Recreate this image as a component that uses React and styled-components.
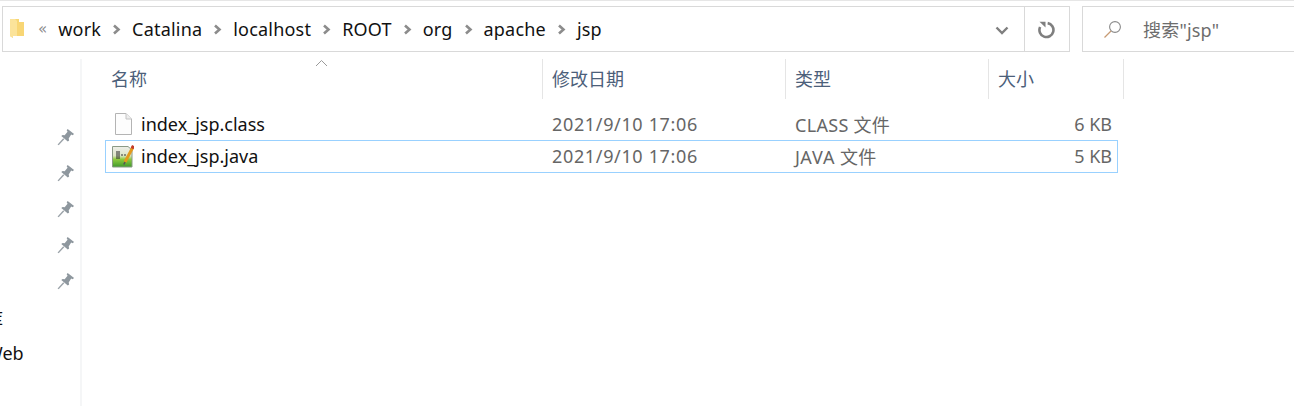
import React from 'react';
import styled, { createGlobalStyle } from 'styled-components';

const GlobalStyle = createGlobalStyle`
  html, body { margin: 0; padding: 0; background: #fff; overflow: hidden; }
  body { font-family: "Noto Sans", "Noto Sans CJK SC", sans-serif; }
`;

const Page = styled.div`
  width: 1294px;
  height: 406px;
  overflow: hidden;
  display: flex;
  flex-direction: column;
  border-top: 1px solid #e6e6e6;
  box-sizing: border-box;
`;

const TopBar = styled.div`
  display: flex;
  height: 46px;
  margin: 5px 0 0 2px;
  flex: none;
`;

const AddressBar = styled.div`
  width: 1068px;
  box-sizing: border-box;
  border: 1px solid #d9d9d9;
  display: flex;
  align-items: center;
  flex: none;
`;

const Crumbs = styled.div`
  flex: 1;
  display: flex;
  align-items: center;
  padding-left: 6px;
  height: 100%;
  min-width: 0;
`;

const Crumb = styled.span`
  font-size: 18px;
  color: #111;
  letter-spacing: 0.2px;
`;

const Chevron = styled.svg`
  width: 9px;
  height: 11px;
  margin: 1px 11px 0;
  flex: none;
`;

const DoubleChevron = styled.span`
  font-size: 15px;
  color: #8a8a8a;
  margin: 0 11px 0 13px;
  font-family: "DejaVu Sans", sans-serif;
  line-height: 1;
`;

const DropButton = styled.div`
  width: 44px;
  height: 100%;
  display: flex;
  align-items: center;
  justify-content: center;
  padding-top: 2px;
  box-sizing: border-box;
`;

const RefreshButton = styled.div`
  width: 45px;
  height: 100%;
  border-left: 1px solid #d9d9d9;
  box-sizing: border-box;
  display: flex;
  align-items: center;
  justify-content: center;
  padding-top: 2px;
`;

const SearchBox = styled.div`
  flex: 1;
  margin-left: 12px;
  border: 1px solid #d9d9d9;
  border-right: none;
  display: flex;
  align-items: center;
  padding-left: 20px;
  gap: 21px;
`;

const SearchText = styled.span`
  font-size: 18px;
  color: #6d6d6d;
  letter-spacing: 0.2px;
`;

const Body = styled.div`
  flex: 1;
  display: flex;
  min-height: 0;
`;

const Sidebar = styled.aside`
  width: 82px;
  flex: none;
  margin-top: 7px;
  border-right: 2px solid #f5f6f7;
  position: relative;
  display: flex;
  flex-direction: column;
  align-items: flex-end;
  padding-top: 60px;
  padding-right: 4px;
  box-sizing: border-box;
  overflow: hidden;
`;

const PinRow = styled.div`
  height: 36px;
  width: 20px;
  display: flex;
  align-items: center;
  justify-content: center;
`;

const ClippedLabel = styled.div`
  position: absolute;
  left: ${p => p.$left}px;
  top: ${p => p.$top}px;
  font-size: 18px;
  color: #111;
  white-space: nowrap;
`;

const Main = styled.main`
  flex: 1;
  padding: 7px 0 0 20px;
  min-width: 0;
  position: relative;
`;

const HeaderRow = styled.div`
  display: flex;
  height: 40px;
`;

const HeaderCell = styled.div`
  width: ${p => p.$w}px;
  box-sizing: border-box;
  border-right: 1px solid #e5e5e5;
  padding-left: 9px;
  font-size: 18px;
  color: #4c607a;
  line-height: 41px;
  flex: none;
`;

const SortCaret = styled.svg`
  position: absolute;
  left: 233px;
  top: 7px;
  width: 13px;
  height: 8px;
`;

const FileList = styled.div`
  margin-top: 9px;
  width: 1013px;
  margin-left: 3px;
`;

const FileRow = styled.div`
  height: 33px;
  margin-bottom: -1px;
  padding-bottom: 2px;
  box-sizing: border-box;
  border: 1px solid ${p => (p.$selected ? '#99d1ff' : 'transparent')};
  display: flex;
  align-items: center;
  font-size: 18px;
`;

const NameCell = styled.div`
  width: 436px;
  flex: none;
  display: flex;
  align-items: center;
  padding-left: 6px;
  box-sizing: border-box;
  gap: 7px;
  color: #111;
`;

const DateCell = styled.div`
  width: 243px;
  flex: none;
  padding-left: 10px;
  box-sizing: border-box;
  color: #666;
  letter-spacing: 0.65px;
`;

const TypeCell = styled.div`
  width: 203px;
  flex: none;
  padding-left: 10px;
  box-sizing: border-box;
  color: #666;
  letter-spacing: 0.3px;
  font-kerning: none;
`;

const SizeCell = styled.div`
  flex: 1;
  text-align: right;
  padding-right: 5px;
  color: #666;
`;

const Arrow = () => (
  <Chevron viewBox="0 0 9 11">
    <path d="M2 1.5 L6.5 5.5 L2 9.5" fill="none" stroke="#8c8c8c" strokeWidth="2.6" />
  </Chevron>
);

const FolderIcon = () => (
  <svg width="16" height="22" viewBox="0 0 16 22" style={{ flex: 'none' }}>
    <path d="M1 1 H10 V4 H15 V17 H4 V20 L1 18 Z" fill="#f7d774" />
    <path d="M1 1 H6 L8 3 V18 H4 V20 L1 18 Z" fill="#fbe39a" />
    <path d="M8 3 V18 H15 V4 H10 Z" fill="#f8d675" />
  </svg>
);

const PinIcon = () => (
  <svg width="18" height="18" viewBox="0 0 16 16">
    <path d="M1 15 L6 9.5" stroke="#9aa2a8" strokeWidth="1.3" fill="none" />
    <path d="M9.5 0.8 L15.2 5.3 L13.8 6.4 L12.6 5.8 L10.4 9.4 L10.8 11.2 L9.6 12 L3.8 7.2 L5 6.2 L6.8 6.4 L9.4 3.4 L8.6 2 Z" fill="#8e979e" />
  </svg>
);

const PlainFileIcon = () => (
  <svg width="22" height="24" viewBox="0 0 22 24" style={{ flex: 'none' }}>
    <path d="M3.5 1.5 H14 L19.5 7 V22.5 H3.5 Z" fill="#fdfdfd" stroke="#b4b4b4" />
    <path d="M14 1.5 V7 H19.5" fill="#eeeeee" stroke="#c4c4c4" />
  </svg>
);

const JavaFileIcon = () => (
  <svg width="22" height="24" viewBox="0 0 22 24" style={{ flex: 'none' }}>
    <defs>
      <linearGradient id="javaFill" x1="0" y1="0" x2="0" y2="1">
        <stop offset="0" stopColor="#eeeeea" />
        <stop offset="0.45" stopColor="#dde6c6" />
        <stop offset="0.62" stopColor="#8fcb3e" />
        <stop offset="1" stopColor="#3f9a2b" />
      </linearGradient>
    </defs>
    <path d="M0.5 2.5 H16 L20 6 V23 H0.5 Z" fill="url(#javaFill)" stroke="#8a9a86" />
    <path d="M5 7 V15 M7 7 V15" stroke="#222" strokeWidth="1" />
    <path d="M9 11 H11 M12 11 H14" stroke="#333" strokeWidth="1" />
    <path d="M13 18 L21 3" stroke="#e39a1e" strokeWidth="3" />
    <path d="M20 4.5 L21.4 1.8" stroke="#c43b2b" strokeWidth="3" />
    <path d="M13 18 L11.8 20.5" stroke="#555" strokeWidth="1.6" />
  </svg>
);

const crumbs = ['work', 'Catalina', 'localhost', 'ROOT', 'org', 'apache', 'jsp'];
const columns = [
  { label: '名称', w: 441 },
  { label: '修改日期', w: 243 },
  { label: '类型', w: 203 },
  { label: '大小', w: 135 },
];
const files = [
  { name: 'index_jsp.class', date: '2021/9/10 17:06', type: 'CLASS 文件', size: '6 KB', Icon: PlainFileIcon },
  { name: 'index_jsp.java', date: '2021/9/10 17:06', type: 'JAVA 文件', size: '5 KB', Icon: JavaFileIcon, selected: true },
];

export default function App() {
  return (
    <Page>
      <GlobalStyle />
      <TopBar>
        <AddressBar>
          <Crumbs>
            <FolderIcon />
            <DoubleChevron>«</DoubleChevron>
            {crumbs.map((c, i) => (
              <React.Fragment key={c}>
                {i > 0 && <Arrow />}
                <Crumb>{c}</Crumb>
              </React.Fragment>
            ))}
          </Crumbs>
          <DropButton>
            <svg width="14" height="9" viewBox="0 0 14 9">
              <path d="M1.5 1.5 L7 7 L12.5 1.5" fill="none" stroke="#7f7f7f" strokeWidth="2.4" />
            </svg>
          </DropButton>
          <RefreshButton>
            <svg width="18" height="18" viewBox="0 0 18 18">
              <path d="M4.5 3 A7 7 0 1 0 13 3.4" fill="none" stroke="#7f7f7f" strokeWidth="2.6" transform="rotate(-30 9 9)" />
              <path d="M1.5 0.8 H7.5 V6.5 Z" fill="#7f7f7f" />
            </svg>
          </RefreshButton>
        </AddressBar>
        <SearchBox>
          <svg width="19" height="19" viewBox="0 0 19 19" style={{ flex: 'none' }}>
            <circle cx="12" cy="7" r="5.4" fill="none" stroke="#8a8a8a" strokeWidth="1.1" />
            <path d="M8 11 L1.5 17.5" stroke="#c79a73" strokeWidth="1.3" />
          </svg>
          <SearchText>搜索"jsp"</SearchText>
        </SearchBox>
      </TopBar>
      <Body>
        <Sidebar>
          {[0, 1, 2, 3, 4].map(i => (
            <PinRow key={i}>
              <PinIcon />
            </PinRow>
          ))}
          <ClippedLabel $left={-15} $top={246}>库</ClippedLabel>
          <ClippedLabel $left={-14} $top={282}>Web</ClippedLabel>
        </Sidebar>
        <Main>
          <HeaderRow>
            {columns.map(c => (
              <HeaderCell key={c.label} $w={c.w}>{c.label}</HeaderCell>
            ))}
          </HeaderRow>
          <SortCaret viewBox="0 0 13 8">
            <path d="M1 7 L6.5 1.5 L12 7" fill="none" stroke="#9a9a9a" strokeWidth="1" />
          </SortCaret>
          <FileList>
            {files.map(f => (
              <FileRow key={f.name} $selected={f.selected}>
                <NameCell>
                  <f.Icon />
                  {f.name}
                </NameCell>
                <DateCell>{f.date}</DateCell>
                <TypeCell>{f.type}</TypeCell>
                <SizeCell>{f.size}</SizeCell>
              </FileRow>
            ))}
          </FileList>
        </Main>
      </Body>
    </Page>
  );
}
